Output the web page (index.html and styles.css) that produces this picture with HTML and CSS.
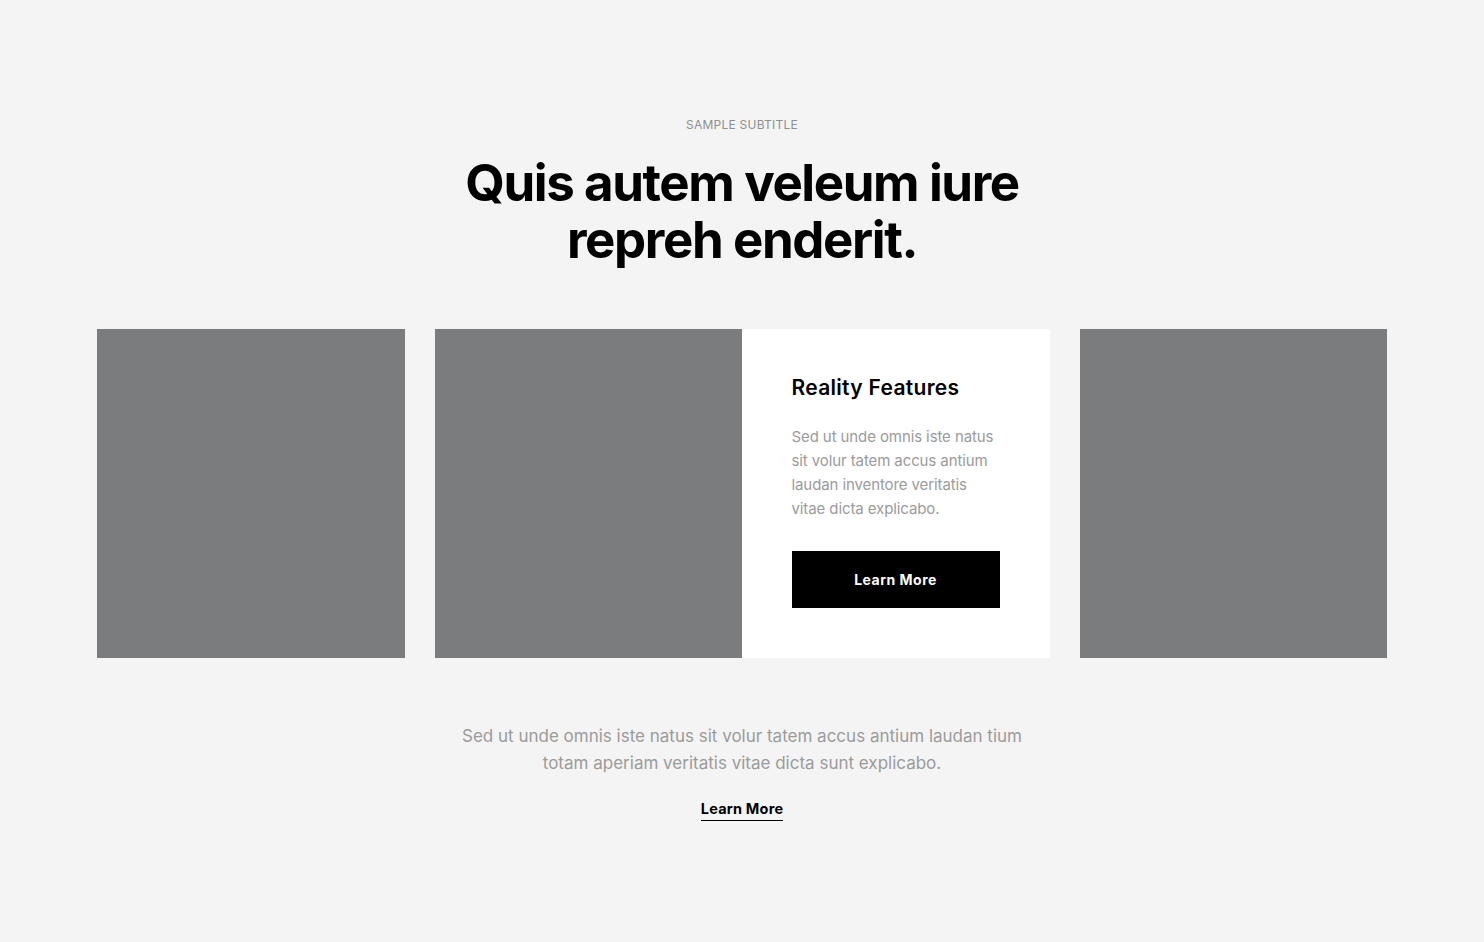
FILE: index.html
```html
<!DOCTYPE html>
<html lang="en">
<head>
<meta charset="utf-8">
<title>Features</title>
<link rel="stylesheet" href="styles.css">
</head>
<body>
<section class="section">
  <header class="head">
    <p class="subtitle">SAMPLE SUBTITLE</p>
    <h1 class="title">Quis autem veleum iure<br>repreh enderit.</h1>
  </header>
  <div class="grid">
    <div class="tile"></div>
    <div class="feature">
      <div class="tile"></div>
      <div class="feature-body">
        <h2 class="feature-title">Reality Features</h2>
        <p class="feature-text">Sed ut unde omnis iste natus sit volur tatem accus antium laudan inventore veritatis vitae dicta explicabo.</p>
        <a class="btn" href="#">Learn More</a>
      </div>
    </div>
    <div class="tile"></div>
  </div>
  <div class="foot">
    <p class="foot-text">Sed ut unde omnis iste natus sit volur tatem accus antium laudan tium<br>totam aperiam veritatis vitae dicta sunt explicabo.</p>
    <a class="link" href="#">Learn More</a>
  </div>
</section>
</body>
</html>
```
FILE: styles.css
```css
* { box-sizing: border-box; }
html, body { margin: 0; padding: 0; }
body {
  background: #f4f4f4;
  font-family: Inter, "Noto Sans", sans-serif;
  color: #000;
  height: 942px;
}
.section {
  padding: 117px 97px 0;
}
.head {
  text-align: center;
}
.subtitle {
  margin: 0;
  font-size: 12px;
  line-height: 16px;
  color: #8f8f8f;
  letter-spacing: 0.25px;
}
.title {
  margin: 21px 0 0;
  font-size: 51px;
  line-height: 57px;
  font-weight: 700;
  letter-spacing: -1.4px;
}
.grid {
  margin-top: 61px;
  display: grid;
  grid-template-columns: 1fr 2fr 1fr;
  gap: 30px;
  height: 329px;
}
.tile {
  background: #7b7c7d;
}
.feature {
  display: grid;
  grid-template-columns: 1fr 1fr;
}
.feature-body {
  background: #fff;
  padding: 43px 50px 0;
}
.feature-title {
  margin: 0;
  font-size: 21px;
  line-height: 32px;
  font-weight: 600;
  letter-spacing: 0.3px;
}
.feature-text {
  margin: 21px 0 0;
  font-size: 15px;
  line-height: 24px;
  color: #9b9b9b;
  letter-spacing: -0.1px;
  max-width: 208px;
}
.btn {
  display: flex;
  align-items: center;
  justify-content: center;
  margin-top: 30px;
  width: 208px;
  height: 57px;
  background: #000;
  color: #fff;
  font-size: 14px;
  font-weight: 700;
  text-decoration: none;
  letter-spacing: 0.5px;
}
.foot {
  margin-top: 65px;
  text-align: center;
}
.foot-text {
  margin: 0;
  font-size: 17px;
  line-height: 27px;
  color: #9b9b9b;
  letter-spacing: 0px;
}
.link {
  display: inline-block;
  margin-top: 22px;
  font-size: 14.5px;
  line-height: 20px;
  font-weight: 700;
  color: #000;
  text-decoration: none;
  border-bottom: 1.5px solid #000;
  padding-bottom: 1px;
  letter-spacing: 0.2px;
}
```
